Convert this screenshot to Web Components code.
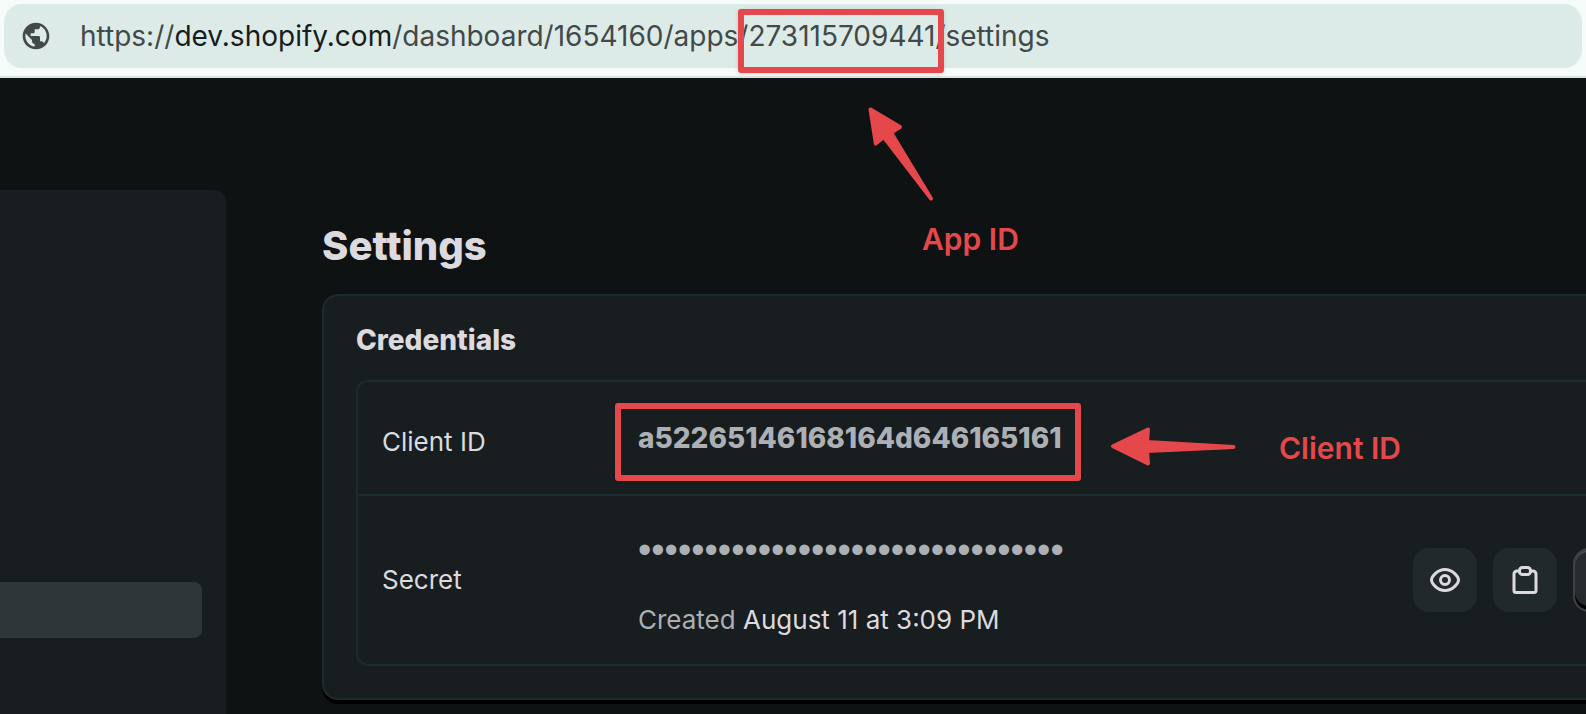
<!DOCTYPE html>
<html lang="en">
<head>
<meta charset="utf-8">
<meta name="viewport" content="width=device-width, initial-scale=1">
<title>Settings</title>
<style>
  html, body {
    margin: 0;
    height: 100%;
  }
  body {
    font-family: Inter, "Liberation Sans", sans-serif;
    background: #0e1213;
    color: #dcdadf;
    overflow: hidden;
  }
</style>
</head>
<body>
<settings-page></settings-page>

<script>
class AddressBar extends HTMLElement {
  constructor() {
    super();
    this.attachShadow({ mode: 'open' });
    this.shadowRoot.innerHTML = `
      <style>
        :host {
          display: block;
          padding: 4px 4px 8px;
          background: #f4fbf9;
          border-bottom: 2px solid #dde5e3;
        }
        .field {
          display: flex;
          align-items: center;
          gap: 28px;
          height: 64px;
          padding: 0 16px;
          border-radius: 18px;
          background: #ddebe8;
          color: #424948;
        }
        svg {
          flex: none;
          width: 32px;
          height: 32px;
          fill: currentColor;
        }
        a {
          font-size: 28px;
          line-height: 40px;
          color: inherit;
          text-decoration: none;
          white-space: nowrap;
        }
        .domain {
          color: #161d1c;
        }
      </style>
      <div class="field">
        <svg viewBox="0 0 24 24" aria-hidden="true">
          <path d="M12 2C6.48 2 2 6.48 2 12s4.48 10 10 10 10-4.48 10-10S17.52 2 12 2zm-1 17.93c-3.95-.49-7-3.85-7-7.93 0-.62.08-1.21.21-1.79L9 15v1c0 1.1.9 2 2 2v1.93zm6.9-2.54c-.26-.81-1-1.39-1.9-1.39h-1v-3c0-.55-.45-1-1-1H8v-2h2c.55 0 1-.45 1-1V7h2c1.1 0 2-.9 2-2v-.41c2.93 1.19 5 4.06 5 7.41 0 2.08-.8 3.97-2.1 5.39z"/>
        </svg>
        <a href="#">https://<span class="domain">dev.shopify.com</span>/dashboard/1654160/apps/273115709441/settings</a>
      </div>
    `;
  }
}

class SideNav extends HTMLElement {
  constructor() {
    super();
    this.attachShadow({ mode: 'open' });
    this.shadowRoot.innerHTML = `
      <style>
        :host {
          display: block;
          box-sizing: border-box;
          padding: 392px 24px 0 0;
          border-top-right-radius: 12px;
          background: #181d1f;
        }
        .current {
          height: 56px;
          border-radius: 0 8px 8px 0;
          background: #2f3638;
        }
      </style>
      <nav><div class="current"></div></nav>
    `;
  }
}

class SettingsCard extends HTMLElement {
  constructor() {
    super();
    this.attachShadow({ mode: 'open' });
    this.shadowRoot.innerHTML = `
      <style>
        :host {
          display: block;
          padding: 24px 32px 32px;
          border: 2px solid #1c2b2d;
          border-radius: 16px;
          background: #181d1f;
          box-shadow: 0 4px 0 #000;
        }
        h2 {
          margin: 0 0 20px;
          font-size: 28px;
          line-height: 40px;
          font-weight: 800;
        }
        .rows {
          border: 2px solid #1c2b2d;
          border-radius: 12px;
        }
      </style>
      <h2>${this.getAttribute('heading')}</h2>
      <div class="rows"><slot></slot></div>
    `;
  }
}

class CredentialRow extends HTMLElement {
  constructor() {
    super();
    this.attachShadow({ mode: 'open' });
    this.shadowRoot.innerHTML = `
      <style>
        :host {
          display: grid;
          grid-template-columns: 256px 1fr auto;
          align-items: center;
          min-height: 64px;
          padding: 24px;
          font-size: 26px;
          line-height: 40px;
        }
        :host(:not(:last-child)) {
          border-bottom: 2px solid #1c2b2d;
        }
        :host(:not(:last-child)) .label {
          padding-top: 8px;
        }
        .actions {
          display: flex;
          gap: 16px;
        }
      </style>
      <div class="label">${this.getAttribute('label')}</div>
      <div><slot></slot></div>
      <div class="actions"><slot name="action"></slot></div>
    `;
  }
}

class IconButton extends HTMLElement {
  constructor() {
    super();
    this.attachShadow({ mode: 'open' });
    const icons = {
      view: '<path d="M2.500 16C2.500 13 8 5.500 16 5.500S29.500 13 29.500 16 24 26.500 16 26.500 2.500 19 2.500 16z"/><circle cx="16" cy="16" r="4.500"/>',
      copy: '<path d="M10.500 7H8a3 3 0 0 0-3 3v16.500a2 2 0 0 0 2 2h18a2 2 0 0 0 2-2V10a3 3 0 0 0-3-3h-2.500"/><rect x="10.500" y="3.500" width="11" height="7" rx="3"/>'
    };
    const icon = this.getAttribute('icon');
    this.shadowRoot.innerHTML = `
      <style>
        :host {
          display: block;
        }
        button {
          display: flex;
          align-items: center;
          justify-content: center;
          width: 64px;
          height: 64px;
          padding: 0;
          border: 0;
          border-radius: 16px;
          background: #22292b;
          color: #dcdadf;
        }
        :host([raised]) button {
          width: 100px;
          border: 2px solid #3d4244;
          box-shadow: inset 0 -4px 0 #000, inset 0 2px 0 #4a4f51;
          background: #262b2d;
        }
        svg {
          width: 32px;
          height: 32px;
          fill: none;
          stroke: currentColor;
          stroke-width: 3;
          stroke-linejoin: round;
        }
      </style>
      <button type="button" aria-label="${this.getAttribute('label')}">
        ${icons[icon] ? `<svg viewBox="0 0 32 32" aria-hidden="true">${icons[icon]}</svg>` : ''}
      </button>
    `;
  }
}

// Arrows, frames and captions laid over the page
class MarkupLayer extends HTMLElement {
  constructor() {
    super();
    this.attachShadow({ mode: 'open' });
    this.shadowRoot.innerHTML = `
      <style>
        :host {
          position: absolute;
          top: 0;
          left: 0;
          color: #e5484b;
          pointer-events: none;
        }
        .frame, .arrow, .caption {
          position: absolute;
        }
        .frame {
          box-sizing: border-box;
          border: 6px solid currentColor;
          border-radius: 3px;
          box-shadow: 0 1px 4px rgba(0, 0, 0, .15);
        }
        .arrow {
          fill: currentColor;
          stroke: currentColor;
          stroke-width: 4;
          stroke-linejoin: round;
        }
        .caption {
          font-size: 30px;
          line-height: 40px;
          font-weight: 600;
          white-space: nowrap;
        }
        .app-frame { left: 738px; top: 9px; width: 206px; height: 64px; }
        .app-arrow { left: 860px; top: 100px; }
        .app-caption { left: 922px; top: 219px; }
        .client-frame { left: 615px; top: 403px; width: 466px; height: 78px; }
        .client-arrow { left: 1104px; top: 420px; }
        .client-caption { left: 1279px; top: 428px; }
      </style>
      <div class="frame app-frame"></div>
      <svg class="arrow app-arrow" width="80" height="110" aria-hidden="true">
        <path d="M10.500 9.500L40 27 31 32.500 71 98.500 23.800 37 15.800 43.500z"/>
      </svg>
      <div class="caption app-caption">App ID</div>
      <div class="frame client-frame"></div>
      <svg class="arrow client-arrow" width="140" height="50" aria-hidden="true">
        <path d="M9 26.200L44 9.500 43 22 129.500 27 43 31 44 43.500z"/>
      </svg>
      <div class="caption client-caption">Client ID</div>
    `;
  }
}

class SettingsPage extends HTMLElement {
  constructor() {
    super();
    this.attachShadow({ mode: 'open' });
    this.shadowRoot.innerHTML = `
      <style>
        :host {
          display: flex;
          flex-direction: column;
          position: relative;
          height: 100%;
          overflow: hidden;
        }
        .body {
          display: flex;
          flex: 1;
          gap: 96px;
          padding-top: 112px;
        }
        side-nav {
          flex: none;
          width: 226px;
        }
        /* the page is wider than the window and runs off to the right */
        main {
          flex: 1;
          min-width: 0;
          margin-right: -147px;
        }
        h1 {
          margin: 32px 0 24px;
          font-size: 40px;
          line-height: 48px;
          font-weight: 800;
        }
        .key {
          font-size: 28px;
          font-weight: 800;
          color: #acafb4;
        }
        .secret {
          display: block;
          height: 40px;
          padding-top: 10px;
          margin-bottom: 30px;
          font-family: "Liberation Sans", Arial, sans-serif;
          font-size: 38px;
          color: #acafb4;
        }
        .created {
          display: block;
          color: #acafb4;
        }
        time {
          color: #dcdadf;
        }
      </style>
      <address-bar></address-bar>
      <div class="body">
        <side-nav></side-nav>
        <main>
          <h1>Settings</h1>
          <settings-card heading="Credentials">
            <credential-row label="Client ID">
              <span class="key">a52265146168164d646165161</span>
            </credential-row>
            <credential-row label="Secret">
              <span class="secret">••••••••••••••••••••••••••••••••</span>
              <span class="created">Created <time>August 11 at 3:09 PM</time></span>
              <icon-button slot="action" icon="view" label="Show secret"></icon-button>
              <icon-button slot="action" icon="copy" label="Copy secret"></icon-button>
              <icon-button slot="action" raised label="Rotate secret"></icon-button>
            </credential-row>
          </settings-card>
        </main>
      </div>
      <markup-layer></markup-layer>
    `;
  }
}

customElements.define('address-bar', AddressBar);
customElements.define('side-nav', SideNav);
customElements.define('settings-card', SettingsCard);
customElements.define('credential-row', CredentialRow);
customElements.define('icon-button', IconButton);
customElements.define('markup-layer', MarkupLayer);
customElements.define('settings-page', SettingsPage);
</script>
</body>
</html>
